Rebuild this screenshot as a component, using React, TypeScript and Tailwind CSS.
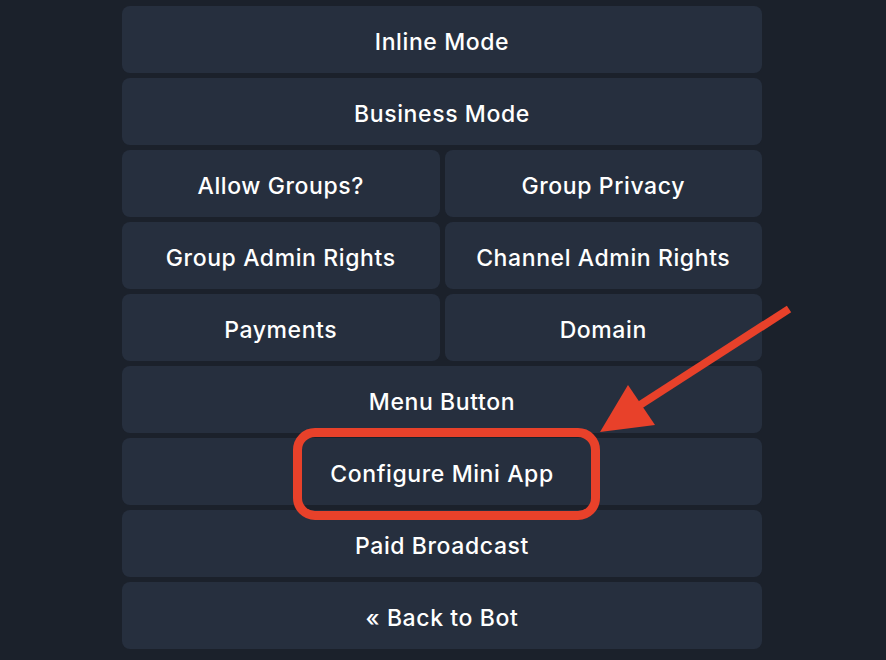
const rows: string[][] = [
  ['Inline Mode'],
  ['Business Mode'],
  ['Allow Groups?', 'Group Privacy'],
  ['Group Admin Rights', 'Channel Admin Rights'],
  ['Payments', 'Domain'],
  ['Menu Button'],
  ['Configure Mini App'],
  ['Paid Broadcast'],
  ['« Back to Bot'],
];

const KeyButton = ({ label }: { label: string }) => (
  <button className="flex-1 h-[67px] rounded-[8px] bg-[#262f3e] text-white text-[23px] font-medium tracking-[0.6px] flex items-center justify-center pt-[6px]">
    {label}
  </button>
);

const App = () => {
  return (
    <div className="relative w-[886px] h-[660px] overflow-hidden bg-[#1b212b] font-['Inter',sans-serif]">
      <div className="ml-[122px] w-[640px] pt-[6px] flex flex-col gap-[5px]">
        {rows.map((row, i) => (
          <div key={i} className="flex gap-[5px]">
            {row.map((label) => (
              <KeyButton key={label} label={label} />
            ))}
          </div>
        ))}
      </div>

      {/* highlight ring */}
      <div className="absolute left-[293px] top-[428px] w-[307px] h-[92px] rounded-[22px] border-[9px] border-[#e8412a]" />

      {/* pointer arrow */}
      <svg className="absolute left-0 top-0" width="886" height="660" viewBox="0 0 886 660">
        <line x1="789" y1="309" x2="640" y2="405" stroke="#e8412a" strokeWidth="8" />
        <polygon points="600,432 628,385 655,425" fill="#e8412a" />
      </svg>
    </div>
  );
};

export default App;
